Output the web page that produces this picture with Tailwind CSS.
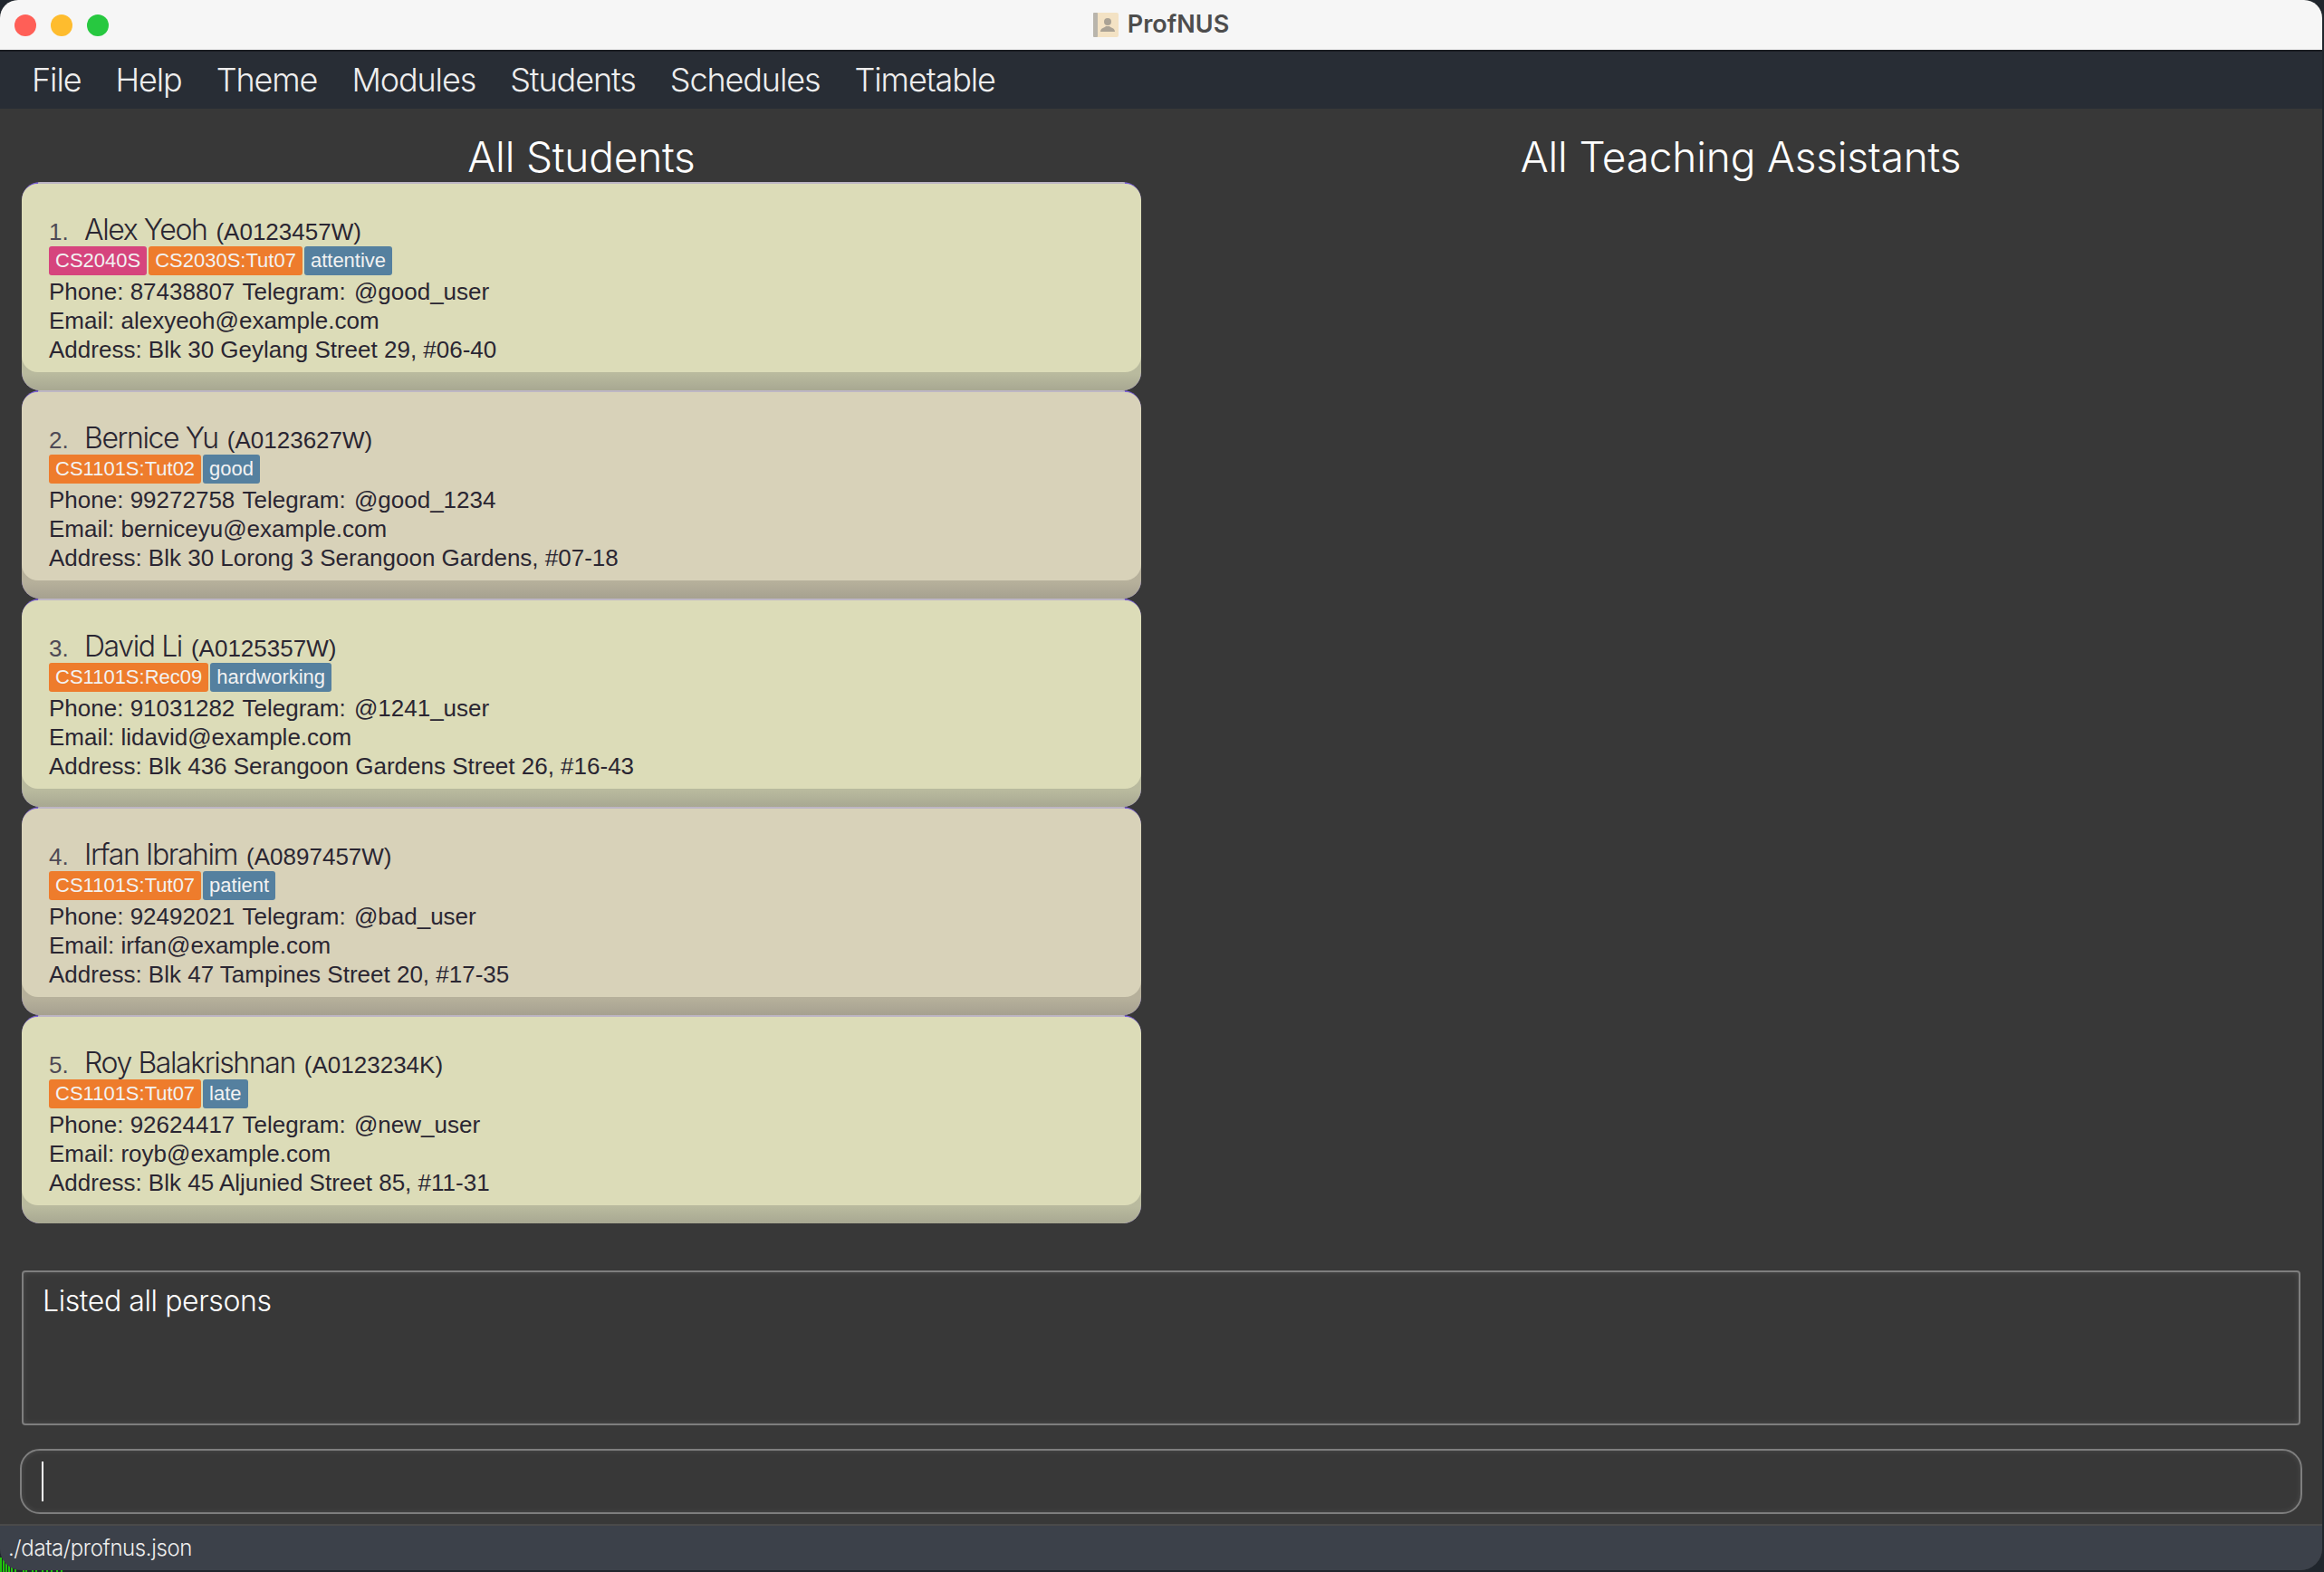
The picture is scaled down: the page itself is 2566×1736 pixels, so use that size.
<!DOCTYPE html>
<html lang="en">
<head>
    <meta charset="UTF-8">
    <title>ProfNUS</title>
    <script src="https://cdn.jsdelivr.net/npm/@tailwindcss/browser@4"></script>
</head>
<body class="relative bg-[#20262d] w-[2566px] h-[1736px] overflow-hidden">

    <!-- terminal text peeking out behind the window -->
    <svg class="absolute left-0 bottom-0 w-[80px] h-[16px]" viewBox="0 0 80 16">
        <path d="M1 0v16M4 2v14M7 4v12M10 8v8M13 11v5M17 13v3M26 13v3M29 13v3M36 13v3M40 13v3M47 13v3M52 13v3M57 13v3M63 13v3M68 13v3" stroke="#22c40e" stroke-width="2"/>
    </svg>

    <div class="relative flex flex-col w-[2564px] h-[1734px] bg-[#383838] rounded-t-[20px] rounded-b-[24px] overflow-hidden">

        <!-- title bar -->
        <div class="relative flex items-center justify-center h-[57px] shrink-0 bg-[#f6f6f6] border-b-2 border-[#1a1d22]">
            <div class="absolute left-[16px] top-[16px] flex gap-[16px]">
                <span class="w-[24px] h-[24px] rounded-full bg-[#ff5f57]"></span>
                <span class="w-[24px] h-[24px] rounded-full bg-[#febc2e]"></span>
                <span class="w-[24px] h-[24px] rounded-full bg-[#27c840]"></span>
            </div>
            <svg class="w-[28px] h-[27px] mr-[10px]" viewBox="0 0 28 27">
                <rect x="0" y="0" width="28" height="27" rx="2" fill="#f3e2c4"/>
                <rect x="0" y="0" width="5" height="27" rx="1" fill="#b9b5ac"/>
                <circle cx="16" cy="10" r="4" fill="#aaa295"/>
                <path d="M8 21c0-4 4-4 6-6h4c2 2 6 2 6 6z" fill="#aaa295"/>
            </svg>
            <span class="font-['Inter'] font-semibold text-[27px] text-[#4d4d4d]">ProfNUS</span>
        </div>

        <!-- menu -->
        <div class="flex items-center h-[63px] shrink-0 gap-[38px] pl-[35px] pb-[1px] bg-[#282d35] text-[#eeeeee] text-[36px] tracking-[-1.1px] font-['Inter'] font-light">
            <span>File</span>
            <span>Help</span>
            <span>Theme</span>
            <span>Modules</span>
            <span>Students</span>
            <span>Schedules</span>
            <span>Timetable</span>
        </div>

        <!-- Main content -->
        <div class="grid grid-cols-2 gap-[44px] h-[1283px] shrink-0 pl-[24px] pr-[24px]">
            <div>
                <h2 class="h-[81px] pt-[26px] leading-[54px] text-center text-white text-[46px] font-['Inter'] font-light tracking-[-0.2px]">All Students</h2>
                <div class="flex flex-col font-['Liberation_Sans'] text-[#2a2632] text-[26px]">

                    <div class="h-[230px] pt-[2px] rounded-t-[20px] rounded-b-[20px] overflow-hidden bg-[linear-gradient(to_right,#7d62d8_18px,#bdb6c4_18px,#bdb6c4_calc(100%-18px),#7d62d8_calc(100%-18px))]">
                        <div class="h-[228px] rounded-t-[18px] bg-linear-to-b from-[#b9ba9e] from-92% to-[#a8a892]">
                            <div class="h-[208px] pl-[30px] pt-[27px] rounded-[18px] bg-[#dcdcb8]">
                                <div class="flex items-baseline h-[42px]">
                                    <span class="w-[39px] text-[#4e4a55]">1.</span>
                                    <span class="font-['Inter'] font-light text-[32px] tracking-[-1.4px] mr-[10px]">Alex Yeoh</span>
                                    <span>(A0123457W)</span>
                                </div>
                                <div class="flex gap-[2px] h-[34px] text-[22px] text-[#f2f2f2]">
                                    <span class="h-[32px] px-[7px] rounded-[3px] leading-[32px] bg-[#d6447d]">CS2040S</span>
                                    <span class="h-[32px] px-[7px] rounded-[3px] leading-[32px] bg-[#ee7c2c]">CS2030S:Tut07</span>
                                    <span class="h-[32px] px-[7px] rounded-[3px] leading-[32px] bg-[#55809f]">attentive</span>
                                </div>
                                <p class="leading-[32px]">Phone: 87438807 <span class="ml-[1px] mr-[2px]">Telegram:</span> @good_user</p>
                                <p class="leading-[32px]">Email: alexyeoh@example.com</p>
                                <p class="leading-[32px]">Address: Blk 30 Geylang Street 29, #06-40</p>
                            </div>
                        </div>
                    </div>

                    <div class="h-[230px] pt-[2px] rounded-t-[20px] rounded-b-[20px] overflow-hidden bg-[linear-gradient(to_right,#7d62d8_18px,#bdb6c4_18px,#bdb6c4_calc(100%-18px),#7d62d8_calc(100%-18px))]">
                        <div class="h-[228px] rounded-t-[18px] bg-linear-to-b from-[#b6b09b] from-92% to-[#a6a190]">
                            <div class="h-[208px] pl-[30px] pt-[27px] rounded-[18px] bg-[#d8d2b9]">
                                <div class="flex items-baseline h-[42px]">
                                    <span class="w-[39px] text-[#4e4a55]">2.</span>
                                    <span class="font-['Inter'] font-light text-[32px] tracking-[-1.4px] mr-[10px]">Bernice Yu</span>
                                    <span>(A0123627W)</span>
                                </div>
                                <div class="flex gap-[2px] h-[34px] text-[22px] text-[#f2f2f2]">
                                    <span class="h-[32px] px-[7px] rounded-[3px] leading-[32px] bg-[#ee7c2c]">CS1101S:Tut02</span>
                                    <span class="h-[32px] px-[7px] rounded-[3px] leading-[32px] bg-[#55809f]">good</span>
                                </div>
                                <p class="leading-[32px]">Phone: 99272758 <span class="ml-[1px] mr-[2px]">Telegram:</span> @good_1234</p>
                                <p class="leading-[32px]">Email: berniceyu@example.com</p>
                                <p class="leading-[32px]">Address: Blk 30 Lorong 3 Serangoon Gardens, #07-18</p>
                            </div>
                        </div>
                    </div>

                    <div class="h-[230px] pt-[2px] rounded-t-[20px] rounded-b-[20px] overflow-hidden bg-[linear-gradient(to_right,#7d62d8_18px,#bdb6c4_18px,#bdb6c4_calc(100%-18px),#7d62d8_calc(100%-18px))]">
                        <div class="h-[228px] rounded-t-[18px] bg-linear-to-b from-[#b9ba9e] from-92% to-[#a8a892]">
                            <div class="h-[208px] pl-[30px] pt-[27px] rounded-[18px] bg-[#dcdcb8]">
                                <div class="flex items-baseline h-[42px]">
                                    <span class="w-[39px] text-[#4e4a55]">3.</span>
                                    <span class="font-['Inter'] font-light text-[32px] tracking-[-1.4px] mr-[10px]">David Li</span>
                                    <span>(A0125357W)</span>
                                </div>
                                <div class="flex gap-[2px] h-[34px] text-[22px] text-[#f2f2f2]">
                                    <span class="h-[32px] px-[7px] rounded-[3px] leading-[32px] bg-[#ee7c2c]">CS1101S:Rec09</span>
                                    <span class="h-[32px] px-[7px] rounded-[3px] leading-[32px] bg-[#55809f]">hardworking</span>
                                </div>
                                <p class="leading-[32px]">Phone: 91031282 <span class="ml-[1px] mr-[2px]">Telegram:</span> @1241_user</p>
                                <p class="leading-[32px]">Email: lidavid@example.com</p>
                                <p class="leading-[32px]">Address: Blk 436 Serangoon Gardens Street 26, #16-43</p>
                            </div>
                        </div>
                    </div>

                    <div class="h-[230px] pt-[2px] rounded-t-[20px] rounded-b-[20px] overflow-hidden bg-[linear-gradient(to_right,#7d62d8_18px,#bdb6c4_18px,#bdb6c4_calc(100%-18px),#7d62d8_calc(100%-18px))]">
                        <div class="h-[228px] rounded-t-[18px] bg-linear-to-b from-[#b6b09b] from-92% to-[#a6a190]">
                            <div class="h-[208px] pl-[30px] pt-[27px] rounded-[18px] bg-[#d8d2b9]">
                                <div class="flex items-baseline h-[42px]">
                                    <span class="w-[39px] text-[#4e4a55]">4.</span>
                                    <span class="font-['Inter'] font-light text-[32px] tracking-[-1.4px] mr-[10px]">Irfan Ibrahim</span>
                                    <span>(A0897457W)</span>
                                </div>
                                <div class="flex gap-[2px] h-[34px] text-[22px] text-[#f2f2f2]">
                                    <span class="h-[32px] px-[7px] rounded-[3px] leading-[32px] bg-[#ee7c2c]">CS1101S:Tut07</span>
                                    <span class="h-[32px] px-[7px] rounded-[3px] leading-[32px] bg-[#55809f]">patient</span>
                                </div>
                                <p class="leading-[32px]">Phone: 92492021 <span class="ml-[1px] mr-[2px]">Telegram:</span> @bad_user</p>
                                <p class="leading-[32px]">Email: irfan@example.com</p>
                                <p class="leading-[32px]">Address: Blk 47 Tampines Street 20, #17-35</p>
                            </div>
                        </div>
                    </div>

                    <div class="h-[230px] pt-[2px] rounded-t-[20px] rounded-b-[20px] overflow-hidden bg-[linear-gradient(to_right,#7d62d8_18px,#bdb6c4_18px,#bdb6c4_calc(100%-18px),#7d62d8_calc(100%-18px))]">
                        <div class="h-[228px] rounded-t-[18px] bg-linear-to-b from-[#b9ba9e] from-92% to-[#a8a892]">
                            <div class="h-[208px] pl-[30px] pt-[27px] rounded-[18px] bg-[#dcdcb8]">
                                <div class="flex items-baseline h-[42px]">
                                    <span class="w-[39px] text-[#4e4a55]">5.</span>
                                    <span class="font-['Inter'] font-light text-[32px] tracking-[-1.4px] mr-[10px]">Roy Balakrishnan</span>
                                    <span>(A0123234K)</span>
                                </div>
                                <div class="flex gap-[2px] h-[34px] text-[22px] text-[#f2f2f2]">
                                    <span class="h-[32px] px-[7px] rounded-[3px] leading-[32px] bg-[#ee7c2c]">CS1101S:Tut07</span>
                                    <span class="h-[32px] px-[7px] rounded-[3px] leading-[32px] bg-[#55809f]">late</span>
                                </div>
                                <p class="leading-[32px]">Phone: 92624417 <span class="ml-[1px] mr-[2px]">Telegram:</span> @new_user</p>
                                <p class="leading-[32px]">Email: royb@example.com</p>
                                <p class="leading-[32px]">Address: Blk 45 Aljunied Street 85, #11-31</p>
                            </div>
                        </div>
                    </div>

                </div>
            </div>
            <div>
                <h2 class="h-[81px] pt-[26px] leading-[54px] text-center text-white text-[46px] font-['Inter'] font-light tracking-[-0.2px]">All Teaching Assistants</h2>
            </div>
        </div>

        <!-- result box -->
        <div class="h-[171px] mx-[24px] shrink-0 pl-[21px] pt-[8px] border-2 border-[#7e7e7e] rounded-[4px] shadow-[inset_0_0_6px_rgba(255,255,255,0.1)] text-white text-[32px] font-['Inter'] font-light tracking-[-0.4px]">
            Listed all persons
        </div>

        <!-- command box -->
        <div class="flex items-center h-[72px] mx-[22px] mt-[26px] shrink-0 pl-[22px] border-2 border-[#7e7e7e] rounded-[22px] shadow-[inset_0_0_6px_rgba(255,255,255,0.1)]">
            <div class="w-[2px] h-[44px] bg-white"></div>
        </div>

        <!-- status bar -->
        <div class="flex items-center flex-1 mt-[11px] pl-[9px] bg-[#3c414a] border-t-2 border-[#4a4a4a] text-[#eeeeee] text-[24px] font-['Inter'] font-light tracking-[-0.4px]">
            ./data/profnus.json
        </div>
    </div>
</body>
</html>
